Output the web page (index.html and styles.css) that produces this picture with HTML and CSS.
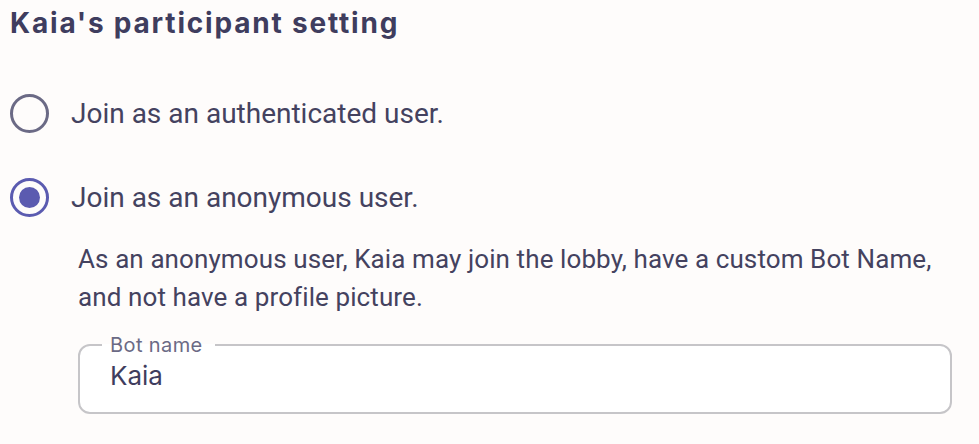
FILE: index.html
```html
<!DOCTYPE html>
<html lang="en">
<head>
  <meta charset="UTF-8" />
  <title>Participant setting</title>
  <link rel="stylesheet" href="styles.css">
</head>
<body>

  <section class="setting">
    <h2>Kaia's participant setting</h2>

    <div class="options">
      <label class="option">
        <span class="radio"></span>
        <span>Join as an authenticated user.</span>
      </label>

      <label class="option">
        <span class="radio checked"></span>
        <span>Join as an anonymous user.</span>
      </label>
    </div>

    <div class="details">
      <p>As an anonymous user, Kaia may join the lobby, have a custom Bot Name, and not have a profile picture.</p>

      <fieldset class="field">
        <legend>Bot name</legend>
        <div class="value">Kaia</div>
      </fieldset>
    </div>
  </section>

</body>
</html>
```

FILE: styles.css
```css
* {
  margin: 0;
  padding: 0;
  box-sizing: border-box;
}

body {
  font-family: Roboto, "Liberation Sans", sans-serif;
  background-color: #fefcfb;
  color: #44425f;
}

.setting {
  padding: 6px 10px;
  width: 960px;
}

h2 {
  font-family: Inter, sans-serif;
  font-size: 28px;
  line-height: 34px;
  font-weight: 700;
  letter-spacing: 1.8px;
  color: #3f3d5e;
  margin-bottom: 53px;
}

.options {
  display: flex;
  flex-direction: column;
  gap: 44px;
}

.option {
  display: flex;
  align-items: center;
  gap: 22px;
  font-size: 28px;
  height: 40px;
}

.radio {
  width: 39px;
  height: 39px;
  border: 3px solid #6b6a85;
  border-radius: 50%;
  display: flex;
  align-items: center;
  justify-content: center;
  flex-shrink: 0;
}

.radio.checked {
  border-color: #5b5bb0;
}

.radio.checked::after {
  content: "";
  width: 21px;
  height: 21px;
  border-radius: 50%;
  background: #5b5bb0;
}

.details {
  padding-left: 68px;
  margin-top: 23px;
}

.details p {
  font-size: 26px;
  line-height: 38px;
  letter-spacing: 0.1px;
  margin-bottom: 19px;
}

.field {
  border: 2px solid #c6c5c8;
  border-radius: 12px;
  background: white;
  padding: 5px 30px 20px;
  width: 874px;
}

.field legend {
  font-family: Inter, sans-serif;
  font-size: 20px;
  line-height: 20px;
  letter-spacing: 0.4px;
  color: #6b6a85;
  padding: 0 12px 0 8px;
  margin-left: -8px;
}

.field .value {
  font-family: Inter, sans-serif;
  font-size: 26px;
  line-height: 32px;
  color: #3f3d5e;
}
```
